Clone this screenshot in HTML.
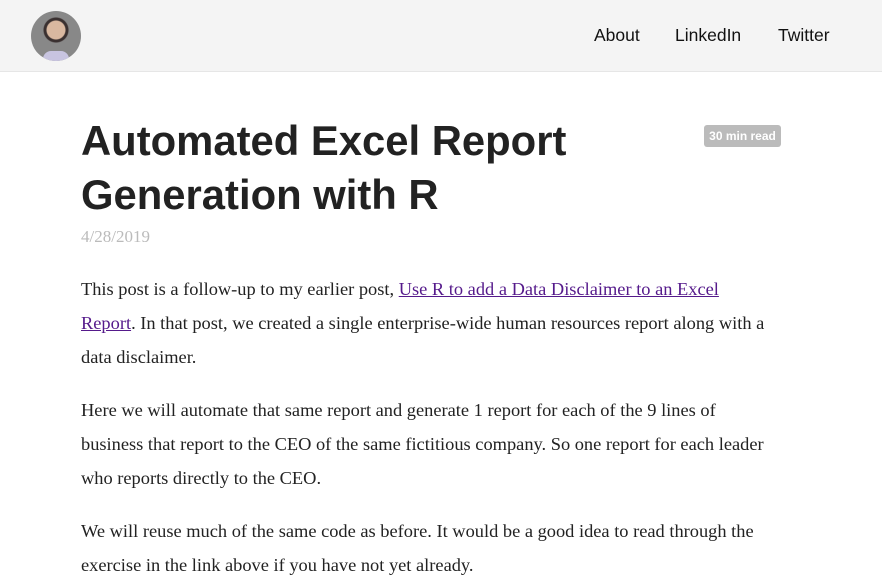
<!DOCTYPE html>
<html><head><style>
body{margin:0;width:882px;height:582px;overflow:hidden;background:#fff;font-family:"Liberation Sans",sans-serif;}
.hdr{position:absolute;left:0;top:0;width:882px;height:71px;background:#f4f4f4;border-bottom:1px solid #e6e6e6;}
.av{position:absolute;left:31px;top:11px;width:50px;height:50px;border-radius:50%;background:radial-gradient(circle at 50% 38%,#d9b8a0 0 9px,#3a3030 10px 12px,#888 13px);overflow:hidden;}
.av:after{content:"";position:absolute;left:12px;top:40px;width:26px;height:16px;background:#c8c4e0;border-radius:8px 8px 0 0;}
.nav a{position:absolute;top:25px;font-size:17.5px;color:#111;text-decoration:none;}
h1{position:absolute;left:81px;top:114px;margin:0;font-size:41.8px;line-height:54px;font-weight:bold;color:#222;width:600px;}
.badge{position:absolute;left:704px;top:125px;width:77px;height:22px;background:#bbb;border-radius:3px;color:#fff;font-size:12px;font-weight:bold;text-align:center;line-height:22px;}
.date{position:absolute;left:81px;top:227px;font-family:"Liberation Serif",serif;font-size:17px;color:#bbb;}
.txt{position:absolute;left:81px;width:690px;font-family:"Liberation Serif",serif;font-size:18.4px;line-height:34px;color:#222;margin:0;}
.txt a{color:#551a8b;}
</style></head><body>
<div class="hdr"><div class="av"></div>
<div class="nav"><a style="left:594px">About</a><a style="left:675px">LinkedIn</a><a style="left:778px">Twitter</a></div></div>
<h1>Automated Excel Report Generation with R</h1>
<div class="badge">30 min read</div>
<div class="date">4/28/2019</div>
<p class="txt" style="top:272px">This post is a follow-up to my earlier post, <a href="#">Use R to add a Data Disclaimer to an Excel Report</a>. In that post, we created a single enterprise-wide human resources report along with a data disclaimer.</p>
<p class="txt" style="top:393px">Here we will automate that same report and generate 1 report for each of the 9 lines of business that report to the CEO of the same fictitious company. So one report for each leader who reports directly to the CEO.</p>
<p class="txt" style="top:514px">We will reuse much of the same code as before. It would be a good idea to read through the exercise in the link above if you have not yet already.</p>
</body></html>
